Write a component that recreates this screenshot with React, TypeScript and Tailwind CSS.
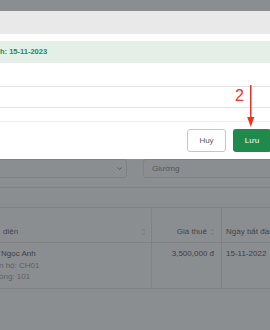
import React from "react";

function SortIcon() {
  return (
    <svg width="5" height="8" viewBox="0 0 5 8" className="shrink-0">
      <path d="M1 3 L2.5 1.5 L4 3" fill="none" stroke="#6f7275" strokeWidth="0.8" />
      <path d="M1 5 L2.5 6.5 L4 5" fill="none" stroke="#6f7275" strokeWidth="0.8" />
    </svg>
  );
}

export default function App() {
  return (
    <div className="relative w-[270px] h-[330px] overflow-hidden bg-[#8b8e91] font-['Liberation_Sans',Arial,sans-serif]">
      {/* dimmed page underneath */}
      <div className="flex flex-col">
        <div className="h-[159px]" />
        <div className="flex h-[19px]">
          <div className="-ml-[10px] w-[137px] rounded-[3px] border border-[#7f8285] flex items-center justify-end pr-[4px]">
            <svg width="5" height="3" viewBox="0 0 5 3">
              <path d="M0.5 0.5 L2.5 2.5 L4.5 0.5" fill="none" stroke="#55585b" strokeWidth="0.9" />
            </svg>
          </div>
          <div className="ml-[16px] flex-1 -mr-[10px] rounded-[3px] border border-[#7f8285] flex items-center pl-[8px] text-[8px] text-[#54575a]">
            Giường
          </div>
        </div>
        <div className="mt-[9px] h-[20px] border-t border-[#7f8285]" />
        <div className="grid grid-cols-[151px_70px_1fr] border-t border-[#7f8285] text-[8px] leading-[11px]">
          {/* header */}
          <div className="h-[35px] border-b border-[#7f8285] flex items-end justify-between pb-[5px] pl-[3px] pr-[5px] text-[#424548]">
            <span>diện</span>
            <span className="mb-[1px]"><SortIcon /></span>
          </div>
          <div className="h-[35px] border-b border-l border-[#7f8285] flex items-end justify-end gap-[3px] pb-[5px] pr-[6px] text-[#424548]">
            <span>Giá thuê</span>
            <span className="mb-[1px]"><SortIcon /></span>
          </div>
          <div className="h-[35px] border-b border-l border-[#7f8285] flex items-end pb-[5px] pl-[4px] text-[#424548] whitespace-nowrap">
            Ngày bắt đầu
          </div>
          {/* row */}
          <div className="h-[46px] border-b border-[#7f8285] pt-[5px] leading-[11.5px]">
            <div className="pl-[1px] text-[#3c3f42]">Ngọc Anh</div>
            <div className="-ml-[1px] text-[#5c5f62]">n hộ: CH01</div>
            <div className="-ml-[1px] text-[#5c5f62]">ồng: 101</div>
          </div>
          <div className="h-[46px] border-b border-l border-[#7f8285] pt-[5px] pr-[7px] text-right leading-[11.5px] text-[#3c3f42] whitespace-nowrap">
            3,500,000 đ
          </div>
          <div className="h-[46px] border-b border-l border-[#7f8285] pt-[5px] pl-[4px] leading-[11.5px] text-[#3c3f42] whitespace-nowrap">
            15-11-2022
          </div>
        </div>
      </div>

      {/* modal */}
      <div className="absolute left-[-20px] right-[-10px] top-[11px] h-[148px] bg-white flex flex-col">
        <div className="h-[23px] bg-[#e9e9e9]" />
        <div className="mt-[7px] h-[22px] bg-[#e3efe7] flex items-center pl-[20px] text-[7.5px] font-bold text-[#2b8a50] whitespace-nowrap">
          h: 15-11-2023
        </div>
        <div className="mt-[23px] h-[22px] border-y border-[#e2e2e2]" />
        <div className="mt-[13px] flex-1 border-t border-[#eeeeee] flex justify-end items-start gap-[7px] pt-[7px] pr-[9px]">
          <button className="w-[39px] h-[23px] rounded-[3px] border border-[#c6c6c6] bg-white text-[8px] text-[#5a5a5a] flex items-center justify-center">
            Huỷ
          </button>
          <button className="w-[38px] h-[23px] rounded-[3px] bg-[#1f8a4c] text-[8px] text-white flex items-center justify-center">
            Lưu
          </button>
        </div>
      </div>

      {/* annotation */}
      <div className="absolute left-[235px] top-[88px] text-[16px] leading-[16px] text-[#f2331f]">2</div>
      <svg className="absolute left-[246px] top-[84px]" width="10" height="45" viewBox="0 0 10 45">
        <line x1="4.75" y1="1" x2="4.75" y2="36" stroke="#f0321e" strokeWidth="1.5" />
        <polygon points="1.2,33 8.3,33 4.75,43" fill="#f0321e" />
      </svg>
    </div>
  );
}
